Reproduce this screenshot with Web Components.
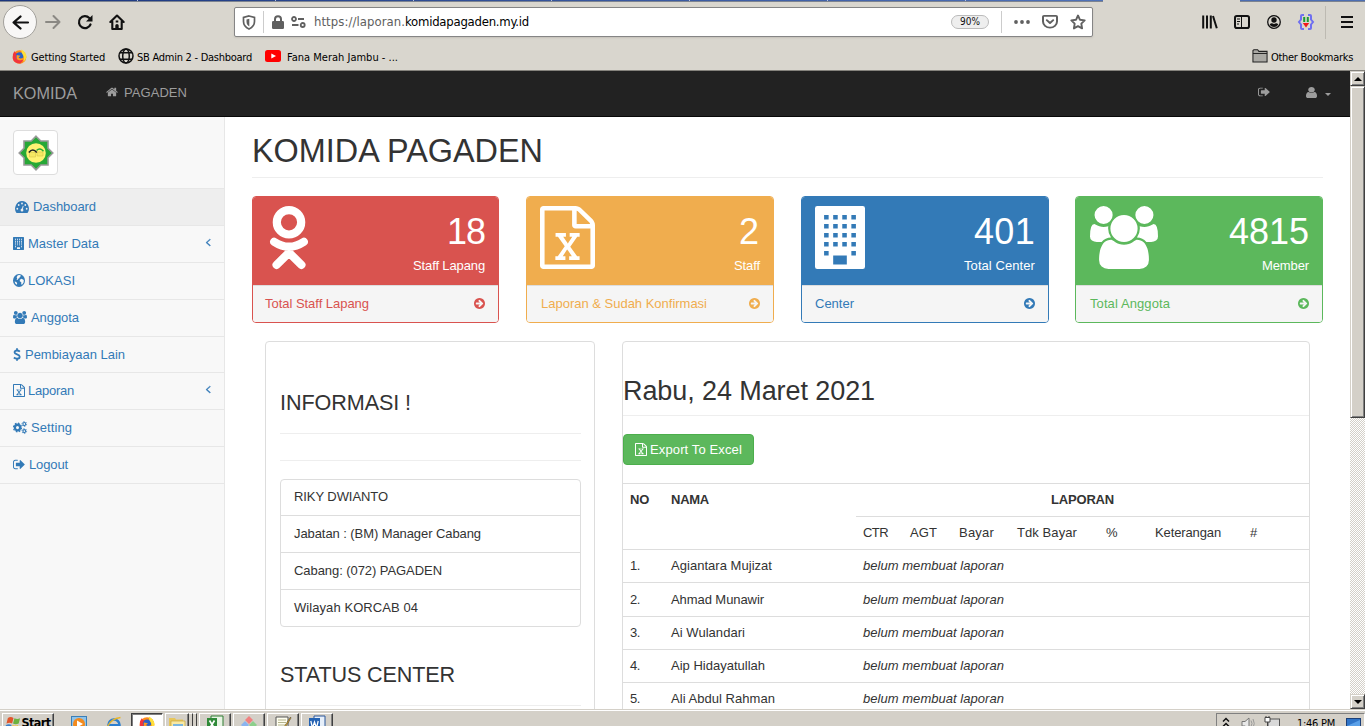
<!DOCTYPE html>
<html lang="id">
<head>
<meta charset="utf-8">
<title>KOMIDA PAGADEN</title>
<style>
    html, body { margin: 0; height: 726px; overflow: hidden; }
    body {
        display: flex;
        flex-direction: column;
        background: #fff;
        color: #333;
        font: 13px/18px "Liberation Sans", Arial, sans-serif;
    }
    .viewport { display: flex; height: 638px; flex: none; }
    .page { flex: 1; min-width: 0; display: flex; flex-direction: column; overflow: hidden; }
    .wrapper { display: flex; flex: 1; min-height: 0; }
    main { flex: 1; min-width: 0; padding: 0 27px; overflow: hidden; }
    .stats { display: grid; grid-template-columns: 247px 248px 248px 247px; column-gap: 27px; height: 127px; margin-top: 18px; }
    .stats > :last-child { margin-left: -1px; }
    .columns { display: flex; gap: 27px; margin: 18px 13px 0 13px; }
</style>
</head>
<body>
    <browser-toolbar></browser-toolbar>
    <bookmarks-bar></bookmarks-bar>
    <div class="viewport">
        <div class="page">
            <site-navbar></site-navbar>
            <div class="wrapper">
                <side-menu>
                    <nav-item icon="tachometer" iw="14" gap="4" active><fit-text w="63">Dashboard</fit-text></nav-item>
                    <nav-item icon="building" iw="11" gap="4" arrow><fit-text w="71">Master Data</fit-text></nav-item>
                    <nav-item icon="globe" iw="12" gap="3"><fit-text w="47">LOKASI</fit-text></nav-item>
                    <nav-item icon="users" iw="14" gap="4"><fit-text w="48">Anggota</fit-text></nav-item>
                    <nav-item icon="usd" iw="8" gap="4" short><fit-text w="100">Pembiayaan Lain</fit-text></nav-item>
                    <nav-item icon="excel" iw="12" gap="3" arrow><fit-text w="46">Laporan</fit-text></nav-item>
                    <nav-item icon="cogs" iw="14" gap="4"><fit-text w="41">Setting</fit-text></nav-item>
                    <nav-item icon="signout" iw="12" gap="4"><fit-text w="39">Logout</fit-text></nav-item>
                </side-menu>
                <main>
                    <page-title><fit-text w="291">KOMIDA PAGADEN</fit-text></page-title>
                    <div class="stats">
                        <stat-card color="#d9534f" icon="odnoklassniki" iw="38" offset="4" pad="12">
                            <fit-text slot="value" w="38">18</fit-text>
                            <fit-text slot="label" w="72">Staff Lapang</fit-text>
                            <fit-text slot="link" w="104">Total Staff Lapang</fit-text>
                        </stat-card>
                        <stat-card color="#f0ad4e" icon="excel" iw="55" pad="14">
                            <fit-text slot="value" w="21">2</fit-text>
                            <fit-text slot="label" w="26">Staff</fit-text>
                            <fit-text slot="link" w="166">Laporan &amp; Sudah Konfirmasi</fit-text>
                        </stat-card>
                        <stat-card color="#337ab7" icon="building" iw="50" pad="13">
                            <fit-text slot="value" w="61">401</fit-text>
                            <fit-text slot="label" w="71">Total Center</fit-text>
                            <fit-text slot="link" w="39">Center</fit-text>
                        </stat-card>
                        <stat-card color="#5cb85c" icon="users" iw="68" offset="1" pad="14">
                            <fit-text slot="value" w="80">4815</fit-text>
                            <fit-text slot="label" w="47">Member</fit-text>
                            <fit-text slot="link" w="80">Total Anggota</fit-text>
                        </stat-card>
                    </div>
                    <div class="columns">
                        <info-panel></info-panel>
                        <report-panel></report-panel>
                    </div>
                </main>
            </div>
        </div>
        <scroll-bar></scroll-bar>
    </div>
    <task-bar></task-bar>

<script>
const ICONS = {
    home: ['64 0 1664 1792', '<path d="M1472 992v480q0 26-19 45t-45 19h-384v-384h-256v384h-384q-26 0-45-19t-19-45v-480q0-1 .5-3t.5-3l575-474 575 474q1 2 1 6zm223-69l-62 74q-8 9-21 11h-3q-13 0-21-7l-692-577-692 577q-12 8-24 7-13-2-21-11l-62-74q-8-10-7-23.5t11-21.5l719-599q32-26 76-26t76 26l244 204v-195q0-14 9-23t23-9h192q14 0 23 9t9 23v408l219 182q10 8 11 21.5t-7 23.5z"/>'],
    signout: ['64 0 1600 1792', '<path d="M704 1440q0 4 1 20t.5 26.5-3 23.5-10 19.5-20.5 6.5h-320q-119 0-203.5-84.5t-84.5-203.5v-704q0-119 84.5-203.5t203.5-84.5h320q13 0 22.5 9.5t9.5 22.5q0 4 1 20t.5 26.5-3 23.5-10 19.5-20.5 6.5h-320q-66 0-113 47t-47 113v704q0 66 47 113t113 47h312l11.5 1 11.5 3 8 5.5 7 9 2 13.5zm928-544q0 26-19 45l-544 544q-19 19-45 19t-45-19-19-45v-288h-448q-26 0-45-19t-19-45v-384q0-26 19-45t45-19h448v-288q0-26 19-45t45-19 45 19l544 544q19 19 19 45z"/>'],
    user: ['256 0 1280 1792', '<path d="M1536 1399q0 109-62.5 187t-150.5 78h-854q-88 0-150.5-78t-62.5-187q0-85 8.5-160.5t31.5-152 58.5-131 94-89 134.5-34.5q131 128 313 128t313-128q76 0 134.5 34.5t94 89 58.5 131 31.5 152 8.5 160.5zm-256-887q0 159-112.5 271.5t-271.5 112.5-271.5-112.5-112.5-271.5 112.5-271.5 271.5-112.5 271.5 112.5 112.5 271.5z"/>'],
    users: ['0 0 1920 1792', '<path d="M593 896q-162 5-265 128h-134q-82 0-138-40.5t-56-118.5q0-353 124-353 6 0 43.5 21t97.5 42.5 119 21.5q67 0 133-23-5 37-5 66 0 139 81 256zm1071 637q0 120-73 189.5t-194 69.5h-874q-121 0-194-69.5t-73-189.5q0-53 3.5-103.5t14-109 26.5-108.5 43-97.5 62-81 85.5-53.5 111.5-20q10 0 43 21.5t73 48 107 48 135 21.5 135-21.5 107-48 73-48 43-21.5q61 0 111.5 20t85.5 53.5 62 81 43 97.5 26.5 108.5 14 109 3.5 103.5zm-1024-1277q0 106-75 181t-181 75-181-75-75-181 75-181 181-75 181 75 75 181zm704 384q0 159-112.5 271.5t-271.5 112.5-271.5-112.5-112.5-271.5 112.5-271.5 271.5-112.5 271.5 112.5 112.5 271.5zm576 225q0 78-56 118.5t-138 40.5h-134q-103-123-265-128 81-117 81-256 0-29-5-66 66 23 133 23 59 0 119-21.5t97.5-42.5 43.5-21q124 0 124 353zm-128-609q0 106-75 181t-181 75-181-75-75-181 75-181 181-75 181 75 75 181z"/>'],
    angle: ['500 300 900 1300', '<path d="M1203 544q0 13-10 23l-393 393 393 393q10 10 10 23t-10 23l-50 50q-10 10-23 10t-23-10l-466-466q-10-10-10-23t10-23l466-466q10-10 23-10t23 10l50 50q10 10 10 23z" stroke="currentColor" stroke-width="50"/>'],
    arrow: ['128 128 1536 1536', '<path d="M1413 896q0-27-18-45l-91-91-362-362q-18-18-45-18t-45 18l-91 91q-18 18-18 45t18 45l189 189h-502q-26 0-45 19t-19 45v128q0 26 19 45t45 19h502l-189 189q-19 19-19 45t19 45l91 91q18 18 45 18t45-18l362-362 91-91q18-18 18-45zm251 0q0 209-103 385.5t-279.5 279.5-385.5 103-385.5-103-279.5-279.5-103-385.5 103-385.5 279.5-279.5 385.5-103 385.5 103 279.5 279.5 103 385.5z" fill-rule="evenodd"/>'],
    excel: ['128 0 1536 1792', '<path d="M1596 380q28 28 48 76t20 88v1152q0 40-28 68t-68 28h-1344q-40 0-68-28t-28-68v-1600q0-40 28-68t68-28h896q40 0 88 20t76 48zm-444-244v376h376q-10-29-22-41l-313-313q-12-12-41-22zm384 1528v-1024h-416q-40 0-68-28t-28-68v-416h-768v1536h1280zm-979-234v106h281v-106h-75l103-161q5-7 10-16.5t7.5-13.5 3.5-4h2q1 4 5 10 2 4 4.5 7.5t6 8 6.5 8.5l107 161h-76v106h291v-106h-68l-192-273 195-282h67v-107h-279v107h74l-103 159q-4 7-10 16.5t-9 13.5l-2 3h-2q-1-4-5-10-6-11-17-23l-106-159h76v-107h-290v107h68l189 272-194 283h-68z"/>'],
    building: ['0 0 1408 1792', '<path fill-rule="evenodd" d="M64 0h1280q64 0 64 64v1664q0 64-64 64H64q-64 0-64-64V64Q0 0 64 0z' +
        [256, 512, 768, 1024, 1280].map(y => [256, 512, 768, 1024].filter(x => y < 1280 || x === 256 || x === 1024)
            .map(x => `M${x} ${y}h128v128h-128z`).join('')).join('') + 'M512 1408h384v256H512z"/>'],
    odnoklassniki: ['0 0 38 63', '<g fill="none" stroke="currentColor" stroke-width="8.2" stroke-linecap="round" stroke-linejoin="round"><circle cx="19" cy="16.3" r="12.2"/><path d="M4.2 35.8Q19 45.6 33.8 35.8M6.6 58.8L19 46.6 31.4 58.8M19 41v5"/></g>'],
    tachometer: ['0 0 14 12', '<path d="M7 1a7 7 0 0 1 5.9 10.6q-.2.4-.7.4H1.8q-.5 0-.7-.4A7 7 0 0 1 7 1z"/><g fill="#eee"><circle cx="2.3" cy="8" r=".9"/><circle cx="3.7" cy="4.7" r=".9"/><circle cx="7" cy="3.2" r=".9"/><circle cx="10.3" cy="4.7" r=".9"/><circle cx="11.7" cy="8" r=".9"/><circle cx="7" cy="9.3" r="1.4"/><path d="M7.6 9.5l1-4-.8-.2-1.3 4z"/></g>'],
    globe: ['0 0 12 12', '<circle cx="6" cy="6" r="6"/><path fill="#f8f8f8" d="M4.8 1.2l2.2-.3 1 .9-1.3.9-.2 1.1-1.3.6-.4 1-1.2.2.6-1.6L3.6 3zM6.800 5.200l1.800-.8 2.200 1.200-.2 2.200-1.600 2.200-.8-.6.1-1.800-1.500-.8zM1.600 7l1.800.4.8 1.400-.5 1.200Q2 9 1.600 7z"/>'],
    usd: ['0 0 8 13', '<path fill="none" stroke="currentColor" stroke-width="1.8" d="M6.9 3.600Q5.700 2.500 4 2.500 1.500 2.500 1.500 4.300c0 2.500 5.200 1.700 5.200 4.400 0 1.300-1.100 2-2.700 2-1.900 0-3.100-1.200-3.100-1.200M4 .3v2.200M4 10.500v2.200"/>'],
    cogs: ['0 0 14 12', '<g fill="none" stroke="currentColor"><circle cx="4.5" cy="6" r="2.6" stroke-width="2.2"/><circle cx="4.5" cy="6" r="4" stroke-width="1.2" stroke-dasharray="1.6 1.54"/><circle cx="11.3" cy="2.8" r="1.4" stroke-width="1.1"/><circle cx="11.3" cy="2.8" r="2.3" stroke-width=".8" stroke-dasharray="1.2 1.2"/><circle cx="11.3" cy="9.3" r="1.4" stroke-width="1.1"/><circle cx="11.3" cy="9.3" r="2.3" stroke-width=".8" stroke-dasharray="1.2 1.2"/></g>'],
    back: ['0 0 16 16', '<path d="M15 8H1.5M8 1.5L1.5 8 8 14.5" fill="none" stroke="currentColor" stroke-width="2.2" stroke-linecap="round" stroke-linejoin="round"/>'],
    forward: ['0 0 16 16', '<path d="M1 8h13.5M8.500 2l6 6-6 6" fill="none" stroke="currentColor" stroke-width="2" stroke-linecap="round" stroke-linejoin="round"/>'],
    reload: ['0 0 16 16', '<path d="M13.5 10.5A6 6 0 1 1 12.300 4" fill="none" stroke="currentColor" stroke-width="2.2" stroke-linecap="round"/><path d="M15.5 1v6.500H9z"/>'],
    house: ['0 0 16 16', '<path d="M1.3 8L8 1.500 14.700 8M3.300 7.500V15h9.400V7.500" fill="none" stroke="currentColor" stroke-width="2.1" stroke-linecap="round" stroke-linejoin="round"/><path d="M6.3 15v-3.500q0-1.500 1.700-1.500t1.700 1.500V15zM6.700 6.500h2.600v2H6.700z"/>'],
    shield: ['0 0 14 15', '<path d="M7 1l5.5 1.4v4.200c0 4-2.300 6-5.500 7.500C3.800 12.600 1.500 10.600 1.500 6.600V2.400z" fill="none" stroke="currentColor" stroke-width="1.7"/><path d="M7.3 3.700v7.700C5.400 10.200 4.500 9 4.500 6.500V4.400z"/>'],
    lock: ['0 0 12 14', '<path d="M3 7V4.200a3 3 0 0 1 6 0V7" fill="none" stroke="currentColor" stroke-width="2"/><rect y="6" width="12" height="8" rx="1.2"/>'],
    perms: ['0 0 15 12', '<g fill="none" stroke="currentColor" stroke-width="1.8"><circle cx="3" cy="3" r="2"/><path d="M7 3h6M1 9h6.500"/><circle cx="11.7" cy="9" r="2"/></g>'],
    dots: ['0 0 16 4', '<circle cx="2" cy="2" r="1.9"/><circle cx="8" cy="2" r="1.9"/><circle cx="14" cy="2" r="1.9"/>'],
    pocket: ['0 0 16 15', '<path d="M2 1h12q1 0 1 1v5a7 6.500 0 0 1-14 0V2q0-1 1-1zM4.800 5.500L8 8.600l3.200-3.100" fill="none" stroke="currentColor" stroke-width="2" stroke-linecap="round" stroke-linejoin="round"/>'],
    star: ['0 0 16 16', '<path d="M8 1.500l2 4.300 4.700.6-3.400 3.200.8 4.800L8 12.100l-4.100 2.300.8-4.800L1.300 6.400 6 5.800z" fill="none" stroke="currentColor" stroke-width="1.9" stroke-linejoin="round"/>'],
    library: ['0 0 16 14', '<path d="M1.200.5v13M5 .5v13M8.800.5v13M11 1l3.800 12.300" fill="none" stroke="currentColor" stroke-width="2"/>'],
    sidebar: ['0 0 16 14', '<rect x="1" y="1" width="14" height="12" rx="1.8" fill="none" stroke="currentColor" stroke-width="2"/><path d="M7 2h1v10H7zM3 3.500h3v1H3zM3 6h3v1H3zM3 8.500h2v1H3z"/>'],
    account: ['0 0 14 14', '<circle cx="7" cy="7" r="6.3" fill="none" stroke="currentColor" stroke-width="1.3"/><circle cx="7" cy="5" r="2.7"/><path d="M2.700 9.500q1-1.500 2.300-1.300l2 .8 2-.8q1.300-.2 2.300 1.300Q10 12 7 12T2.700 9.500z"/>'],
    braces: ['0 0 16 16', '<g fill="none" stroke="#6f6ff0" stroke-width="2"><path d="M6 1H4Q3 1 3 2v3.500L1 8l2 2.500V14q0 1 1 1h2M10 1h2q1 0 1 1v3.500L15 8l-2 2.500V14q0 1-1 1h-2"/></g><path d="M5.200 3H7.200v5H5.200zM8.800 3h2v5h-2z" fill="#1c9a35"/><path d="M4.800 9h6.400L8 13.500z" fill="#f01818"/>'],
    menu: ['0 0 12 12', '<path d="M0 0h12v2H0zM0 5h12v2H0zM0 10h12v2H0z"/>'],
    firefox: ['0 0 16 16', '<circle cx="8" cy="8.500" r="7.300" fill="#ff8a16"/><path d="M1 5.500Q2 3 3 2q0 1.500 1 2l2 .5L5 8l3 3 4 1-3 3.500Q2 15.500.8 10z" fill="#f1343c"/><circle cx="8.200" cy="7.500" r="4" fill="#2a62c8"/><path d="M5 6.500l4 .7-2 1.800q2 2 5 0-1 3.500-4.500 3T5 6.500z" fill="#ff9a1f"/><path d="M10 .5q5 2.500 5.500 8-1 4-3.500 5 1.500-5-.5-7.500T10 .5z" fill="#ffe03a"/>'],
    world: ['0 0 16 16', '<g fill="none" stroke="#111" stroke-width="1.5"><circle cx="8" cy="8" r="7"/><ellipse cx="8" cy="8" rx="3.300" ry="7"/><path d="M2 4.700h12M2 11.300h12"/></g>'],
    youtube: ['0 0 16 12', '<rect width="16" height="12" rx="2.500" fill="#f00"/><path d="M6.300 3.400v5.200L11 6z" fill="#fff"/>'],
    folder: ['0 0 17 14', '<path d="M1 13V1.500L2 .7h4l1.300 1.700H16V13z" fill="#aaa9a4" stroke="#222" stroke-width="1.100"/><path d="M1 4.500h15" stroke="#222"/>'],
    emblem: ['0 0 36 36', '<path d="M18 1.200l4.800 4.800H30v7.200l4.800 4.800-4.800 4.800V30h-7.200L18 34.800 13.200 30H6v-7.200L1.200 18 6 13.200V6h7.200z" fill="#27a836" stroke="#999" stroke-width="1.600"/><circle cx="18" cy="18" r="9.800" fill="#fff373"/><path d="M11.500 17.500h6v4.500h-6zM19 17h6v4h-6z" fill="#f6e963" stroke="#d9c84a" stroke-width=".6"/><path d="M10.800 17.500q4-5 8 0" fill="none" stroke="#222" stroke-width="1.500"/><path d="M18.500 15.500q3.500-3.500 7 .8" fill="none" stroke="#27a836" stroke-width="1.400"/>'],
    flag: ['0 0 16 16', '<path d="M2 2q3-2 6 0L6.500 8Q4 6.500.500 8z" fill="#e0562c"/><path d="M9 2.500q3 1.500 6 0L13.500 8Q10 9.500 7.500 8z" fill="#6cb33f"/><path d="M0 9.500q3-1.500 6 0L4.500 15q-3-1.500-6 0z" fill="#3b7fc9"/><path d="M7 9.500q3 1.500 6 0L11.500 15q-3 1-6 0z" fill="#f5c32c"/>'],
    player: ['0 0 16 16', '<rect x=".5" y=".5" width="15" height="14" fill="#8fc3ea" stroke="#3a7fb8"/><circle cx="8" cy="8" r="6" fill="#f28a1e"/><path d="M6 4.500v7L12 8z" fill="#fff"/>'],
    explorer: ['0 0 16 16', '<circle cx="8" cy="9" r="5.500" fill="none" stroke="#2c7fd0" stroke-width="2.600"/><path d="M3 9h11" stroke="#2c7fd0" stroke-width="2"/><path d="M1 12Q4 3 14.500 1.500" fill="none" stroke="#e8b52a" stroke-width="1.400"/>'],
    files: ['0 0 16 16', '<path d="M0 2h6l1 1.500h7V16H0z" fill="#e7c65b"/><path d="M2 5h14v11H2z" fill="#f8e9a4" stroke="#c9a63c" stroke-width=".7"/><path d="M4 8h10v3H4z" fill="#7cb6df"/>'],
    sheet: ['0 0 16 16', '<path d="M4 0h12v16H4z" fill="#e8f4e4" stroke="#2f7d32"/><path d="M0 2h10v14H0z" fill="#2f8a38"/><path d="M2.500 4.500l5 8M7.500 4.500l-5 8" stroke="#fff" stroke-width="1.700"/>'],
    git: ['0 0 16 16', '<path d="M8 0l4 4-4 4-4-4z" fill="#f08080"/><path d="M4 5l4 4-4 4-4-4z" fill="#8ab4f0"/><path d="M12 5l4 4-4 4-4-4z" fill="#8ccf8c"/>'],
    notepad: ['0 0 16 16', '<path d="M1 1h12v15H1z" fill="#fffef0" stroke="#555"/><path d="M3 4h8M3 6.500h8M3 9h8" stroke="#b4b48c"/><path d="M15.500 1L9 11l-.5 2 1.600-1.300L16 2z" fill="#f0b020" stroke="#333" stroke-width=".5"/>'],
    word: ['0 0 16 16', '<path d="M5 0h11v16H5z" fill="#e6effa" stroke="#2b579a"/><path d="M0 2h11v14H0z" fill="#2463b4"/><path d="M1.800 5l1.700 7 2-6 2 6 1.700-7" fill="none" stroke="#fff" stroke-width="1.300"/>'],
    speaker: ['0 0 14 13', '<path d="M1 4.500h3L8 1v11L4 9H1z" fill="#e8e8e8" stroke="#777"/><path d="M10 3.500q2 3 0 6M12 2q2.500 4.500 0 9" fill="none" stroke="#999"/>'],
    network: ['0 0 16 14', '<rect x="4" y="3" width="11.500" height="9" fill="#d8d8d8" stroke="#555"/><path d="M1 1.500h5V6H1zM3.500 6v6M2 0v2M5 0v2" fill="#fff" stroke="#444"/>'],
    screen: ['0 0 15 12', '<rect x=".5" y=".5" width="14" height="11" fill="#2f74c8" stroke="#1b3f78"/><path d="M1 8L14 2v9H1z" fill="#5aa0e8"/>'],
    chevrons: ['0 0 8 11', '<path d="M1 4.500L4 1.500l3 3M1 9.500l3-3 3 3" fill="none" stroke="#111" stroke-width="1.500"/>']
};

class UiIcon extends HTMLElement {
    connectedCallback() {
        const [box, art] = ICONS[this.getAttribute('name')];
        const w = this.getAttribute('w');
        const h = this.getAttribute('h') || w;
        if (!this.shadowRoot) this.attachShadow({ mode: 'open' });
        this.shadowRoot.innerHTML = `
            <style>
                :host { display: inline-flex; flex: none; width: ${w}px; height: ${h}px; }
                svg { width: 100%; height: 100%; overflow: visible; }
            </style>
            <svg viewBox="${box}" fill="currentColor" preserveAspectRatio="none">${art}</svg>
        `;
    }
}

// Text set to a fixed advance width by spreading the difference over its letters
class FitText extends HTMLElement {
    connectedCallback() {
        if (!this.shadowRoot) this.attachShadow({ mode: 'open' });
        this.shadowRoot.innerHTML = `
            <style>
                :host { display: inline-block; flex: none; white-space: nowrap; }
            </style>
            <slot></slot>
        `;
        const range = document.createRange();
        range.selectNodeContents(this);
        const width = range.getBoundingClientRect().width;
        const target = Number(this.getAttribute('w'));
        this.style.letterSpacing = `${(target - width) / this.textContent.length}px`;
    }
}

class BrowserToolbar extends HTMLElement {
    connectedCallback() {
        this.attachShadow({ mode: 'open' });
        this.shadowRoot.innerHTML = `
            <style>
                :host { display: block; flex: none; height: 44px; background: #d9d6ce; color: #111; font: 13px/16px "DejaVu Sans Condensed", sans-serif; }
                .tabs { display: flex; justify-content: space-between; height: 2px; box-sizing: border-box; }
                .strip { border-bottom: 1px solid #7c8390; background: repeating-linear-gradient(90deg, transparent 0 137px, #b7c2dd 137px 138px), linear-gradient(90deg, #1a357d, #4f72b8); }
                .strip:first-child { width: 1103px; }
                .strip:last-child { width: 125px; background: #4c6eb3; }
                .bar { display: flex; align-items: center; height: 40px; }
                .cell { display: flex; align-items: center; justify-content: center; width: 32px; height: 32px; flex: none; }
                .back { box-sizing: border-box; width: 34px; height: 34px; margin-left: 3px; border: 1px solid #a2a09b; border-radius: 50%; background: #f8f7f6; }
                .url { display: flex; align-items: center; box-sizing: border-box; width: 859px; height: 30px; margin-left: 101px; border: 1px solid #858585; border-radius: 2px; background: #fff; color: #606060; box-shadow: 0 1px 2px #c4c1b9; }
                .line { width: 1px; height: 22px; background: #ccc; }
                .url b { font-weight: normal; color: #000; }
                .zoom { display: flex; align-items: center; justify-content: center; box-sizing: border-box; width: 38px; height: 14px; margin-left: auto; border: 1px solid #bbb; border-radius: 8px; background: #eee; color: #111; font-size: 10px; }
                .right { display: flex; margin-left: 101px; align-items: center; }
            </style>
            <div class="tabs"><div class="strip"></div><div class="strip"></div></div>
            <div class="bar">
                <div class="cell back"><ui-icon name="back" w="17" h="15"></ui-icon></div>
                <div class="cell" style="color:#8a8883"><ui-icon name="forward" w="16"></ui-icon></div>
                <div class="cell"><ui-icon name="reload" w="16"></ui-icon></div>
                <div class="cell"><ui-icon name="house" w="16"></ui-icon></div>
                <div class="url">
                    <ui-icon name="shield" w="14" h="15" style="margin:0 7px"></ui-icon>
                    <div class="line"></div>
                    <ui-icon name="lock" w="12" h="14" style="margin-left:8px"></ui-icon>
                    <ui-icon name="perms" w="15" h="12" style="margin:0 8px 0 7px"></ui-icon>
                    <fit-text w="91">https://laporan.</fit-text><b><fit-text w="124">komidapagaden.my.id</fit-text></b>
                    <div class="zoom"><fit-text w="20">90%</fit-text></div>
                    <div class="line" style="margin:0 12px"></div>
                    <ui-icon name="dots" w="16" h="4"></ui-icon>
                    <ui-icon name="pocket" w="16" h="14" style="margin:0 12px"></ui-icon>
                    <ui-icon name="star" w="16" style="margin-right:6px"></ui-icon>
                </div>
                <div class="right">
                    <div class="cell"><ui-icon name="library" w="16" h="14"></ui-icon></div>
                    <div class="cell"><ui-icon name="sidebar" w="16" h="14"></ui-icon></div>
                    <div class="cell"><ui-icon name="account" w="14"></ui-icon></div>
                    <div class="cell"><ui-icon name="braces" w="16"></ui-icon></div>
                    <div class="line" style="height:33px;margin:0 5px 0 3px;background:#bdbab2"></div>
                    <div class="cell"><ui-icon name="menu" w="12"></ui-icon></div>
                </div>
            </div>
        `;
    }
}

class BookmarksBar extends HTMLElement {
    connectedCallback() {
        this.attachShadow({ mode: 'open' });
        this.shadowRoot.innerHTML = `
            <style>
                :host { display: flex; align-items: center; box-sizing: border-box; flex: none; height: 27px; padding: 0 12px; border-bottom: 1px solid #85837d; background: #d9d6ce; color: #000; font: 11px/14px "DejaVu Sans Condensed", sans-serif; }
                span { display: flex; align-items: center; margin-right: 13px; }
                span:last-child { margin: 0 0 0 auto; }
                fit-text { padding-top: 1px; }
            </style>
            <span><ui-icon name="firefox" w="15" style="margin:-2px 4px 0 0"></ui-icon><fit-text w="74">Getting Started</fit-text></span>
            <span><ui-icon name="world" w="16" style="margin:-2px 3px 0 0"></ui-icon><fit-text w="115">SB Admin 2 - Dashboard</fit-text></span>
            <span><ui-icon name="youtube" w="16" h="12" style="margin:-2px 6px 0 0"></ui-icon><fit-text w="111">Fana Merah Jambu - ...</fit-text></span>
            <span><ui-icon name="folder" w="16" h="14" style="margin:-2px 3px 0 0"></ui-icon><fit-text w="82">Other Bookmarks</fit-text></span>
        `;
    }
}

class SiteNavbar extends HTMLElement {
    connectedCallback() {
        this.attachShadow({ mode: 'open' });
        this.shadowRoot.innerHTML = `
            <style>
                :host { display: flex; align-items: center; box-sizing: border-box; flex: none; height: 46px; padding: 0 19px 2px 13px; border-bottom: 1px solid #080808; background: #222; color: #9d9d9d; }
                .brand { font-size: 16.2px; margin-right: 29px; }
                .caret { border: 3px solid transparent; border-top-color: currentColor; border-bottom: 0; margin: 4px 0 0 8px; }
            </style>
            <span class="brand"><fit-text w="64">KOMIDA</fit-text></span>
            <ui-icon name="home" w="12" style="margin:0 6px 1px 0"></ui-icon>
            <fit-text w="63">PAGADEN</fit-text>
            <ui-icon name="signout" w="12" style="margin:0 0 1px auto"></ui-icon>
            <ui-icon name="user" w="11" h="13" style="margin:0 0 1px 36px"></ui-icon>
            <span class="caret"></span>
        `;
    }
}

class SideMenu extends HTMLElement {
    connectedCallback() {
        this.attachShadow({ mode: 'open' });
        this.shadowRoot.innerHTML = `
            <style>
                :host { display: block; box-sizing: border-box; flex: none; width: 225px; border-right: 1px solid #e7e7e7; background: #f8f8f8; }
                .logo { height: 72px; box-sizing: border-box; padding: 13px; border-bottom: 1px solid #e7e7e7; }
                .thumb { display: flex; align-items: center; justify-content: center; box-sizing: border-box; width: 45px; height: 45px; border: 1px solid #ddd; border-radius: 4px; background: #fff; }
            </style>
            <div class="logo"><div class="thumb"><ui-icon name="emblem" w="36"></ui-icon></div></div>
            <slot></slot>
        `;
    }
}

class NavItem extends HTMLElement {
    connectedCallback() {
        const pad = this.hasAttribute('active') ? 15 : 13;
        this.attachShadow({ mode: 'open' });
        this.shadowRoot.innerHTML = `
            <style>
                :host { display: flex; align-items: center; box-sizing: border-box; height: 37px; padding: 0 12px 0 ${pad}px; border-bottom: 1px solid #e7e7e7; color: #337ab7; }
                :host([active]) { background: #eee; }
                :host([short]) { height: 36px; }
            </style>
            <ui-icon name="${this.getAttribute('icon')}" w="${this.getAttribute('iw')}" h="13" style="margin:-1px ${this.getAttribute('gap')}px 0 0"></ui-icon>
            <slot></slot>
            ${this.hasAttribute('arrow') ? '<ui-icon name="angle" w="7" h="9" style="margin:0 0 4px auto"></ui-icon>' : ''}
        `;
    }
}

class PageTitle extends HTMLElement {
    connectedCallback() {
        this.attachShadow({ mode: 'open' });
        this.shadowRoot.innerHTML = `
            <style>
                :host { display: block; box-sizing: border-box; height: 61px; padding-top: 16px; border-bottom: 1px solid #eee; font-size: 32.4px; line-height: 36px; }
            </style>
            <slot></slot>
        `;
    }
}

class StatCard extends HTMLElement {
    connectedCallback() {
        this.attachShadow({ mode: 'open' });
        this.shadowRoot.innerHTML = `
            <style>
                :host { --tone: ${this.getAttribute('color')}; display: flex; flex-direction: column; box-sizing: border-box; border: 1px solid var(--tone); border-radius: 4px; overflow: hidden; }
                .head { display: flex; justify-content: space-between; box-sizing: border-box; height: 88px; padding: 9px 13px; background: var(--tone); color: #fff; }
                .text { display: flex; flex-direction: column; align-items: flex-end; }
                .value { font-size: 36px; line-height: 40px; margin-top: 6px; }
                .label { margin-top: 5px; }
                .foot { display: flex; flex: 1; align-items: center; justify-content: space-between; padding: 0 13px 0 ${this.getAttribute('pad')}px; border-top: 1px solid #ddd; background: #f5f5f5; color: var(--tone); }
            </style>
            <div class="head">
                <ui-icon name="${this.getAttribute('icon')}" w="${this.getAttribute('iw')}" h="63" style="margin-left:${this.getAttribute('offset') || 0}px"></ui-icon>
                <div class="text">
                    <div class="value"><slot name="value"></slot></div>
                    <div class="label"><slot name="label"></slot></div>
                </div>
            </div>
            <div class="foot"><slot name="link"></slot><ui-icon name="arrow" w="11" style="margin-bottom:1px"></ui-icon></div>
        `;
    }
}

class InfoPanel extends HTMLElement {
    connectedCallback() {
        this.attachShadow({ mode: 'open' });
        this.shadowRoot.innerHTML = `
            <style>
                :host { display: block; box-sizing: border-box; flex: none; width: 330px; height: 450px; padding: 0 13px 0 14px; border: 1px solid #ddd; border-radius: 4px; }
                .title { font-size: 21.6px; line-height: 24px; padding: 49px 0 18px; }
                .rule { height: 1px; background: #eee; }
                ul { margin: 18px 0 0; padding: 0; list-style: none; border: 1px solid #ddd; border-radius: 4px; }
                li { display: flex; align-items: center; box-sizing: border-box; height: 37px; padding-left: 13px; border-top: 1px solid #ddd; }
                li:first-child { height: 35px; padding-bottom: 2px; border-top: 0; }
                ul + .title { padding-top: 36px; }
            </style>
            <div class="title"><fit-text w="131">INFORMASI !</fit-text></div>
            <div class="rule"></div>
            <div class="rule" style="margin-top:26px"></div>
            <ul>
                <li><fit-text w="94">RIKY DWIANTO</fit-text></li>
                <li><fit-text w="187">Jabatan : (BM) Manager Cabang</fit-text></li>
                <li><fit-text w="148">Cabang: (072) PAGADEN</fit-text></li>
                <li><fit-text w="124">Wilayah KORCAB 04</fit-text></li>
            </ul>
            <div class="title"><fit-text w="175">STATUS CENTER</fit-text></div>
            <div class="rule"></div>
        `;
    }
}

const STAFF = [
    ['Agiantara Mujizat', 101],
    ['Ahmad Munawir', 93],
    ['Ai Wulandari', 74],
    ['Aip Hidayatullah', 94],
    ['Ali Abdul Rahman', 104]
];

class ReportPanel extends HTMLElement {
    connectedCallback() {
        const rows = STAFF.map(([name, width], i) => `
            <div class="row" style="${i === 1 ? 'height:34px;padding-bottom:0' : 'height:33px'}">
                <fit-text w="10">${i + 1}.</fit-text>
                <fit-text w="${width}">${name}</fit-text>
                <i><fit-text w="141">belum membuat laporan</fit-text></i>
            </div>`).join('');
        this.attachShadow({ mode: 'open' });
        this.shadowRoot.innerHTML = `
            <style>
                :host { display: block; box-sizing: border-box; flex: none; width: 688px; height: 450px; border: 1px solid #ddd; border-radius: 4px; }
                .title { box-sizing: border-box; height: 74px; padding-top: 34px; border-bottom: 1px solid #eee; font-size: 27px; line-height: 30px; }
                .export { display: flex; align-items: center; justify-content: center; box-sizing: border-box; width: 131px; height: 31px; margin: 18px 0; border: 1px solid #4cae4c; border-radius: 4px; background: #5cb85c; color: #fff; }
                .row, .head { display: grid; grid-template-columns: 41px 192px 1fr; align-items: center; box-sizing: border-box; padding-left: 7px; border-top: 1px solid #ddd; }
                .row { padding-bottom: 1px; }
                .head { height: 66px; font-weight: bold; align-items: start; }
                .head > fit-text { padding-top: 7px; }
                .group { display: flex; flex-direction: column; margin-left: -7px; }
                .group > div { box-sizing: border-box; height: 32px; padding-top: 7px; text-align: center; }
                .group > .sub { display: grid; grid-template-columns: 47px 49px 58px 89px 49px 95px 1fr; height: 33px; padding-left: 7px; border-top: 1px solid #ddd; font-weight: normal; text-align: left; }
            </style>
            <div class="title"><fit-text w="252">Rabu, 24 Maret 2021</fit-text></div>
            <div class="export"><ui-icon name="excel" w="12" h="13" style="margin-right:3px"></ui-icon><fit-text w="92">Export To Excel</fit-text></div>
            <div class="head">
                <fit-text w="19">NO</fit-text>
                <fit-text w="38">NAMA</fit-text>
                <div class="group">
                    <div><fit-text w="63">LAPORAN</fit-text></div>
                    <div class="sub">
                        <span><fit-text w="25">CTR</fit-text></span>
                        <span><fit-text w="27">AGT</fit-text></span>
                        <span><fit-text w="35">Bayar</fit-text></span>
                        <span><fit-text w="60">Tdk Bayar</fit-text></span>
                        <span><fit-text w="12">%</fit-text></span>
                        <span><fit-text w="66">Keterangan</fit-text></span>
                        <span><fit-text w="8">#</fit-text></span>
                    </div>
                </div>
            </div>
            ${rows}
        `;
    }
}

class ScrollBar extends HTMLElement {
    connectedCallback() {
        this.attachShadow({ mode: 'open' });
        this.shadowRoot.innerHTML = `
            <style>
                :host { display: flex; flex-direction: column; flex: none; width: 15px; background: repeating-conic-gradient(#fff 0 25%, #d4d0c8 0 50%) 0 0 / 2px 2px; }
                div { display: flex; align-items: center; justify-content: center; box-sizing: border-box; height: 15px; background: #d4d0c8; border: 1px solid; border-color: #d4d0c8 #404040 #404040 #d4d0c8; box-shadow: inset 1px 1px #fff, inset -1px -1px #808080; }
                .thumb { height: 332px; }
                .down { margin-top: auto; }
                i { border: 4px solid transparent; border-top: 0; border-bottom-color: #000; }
                .down i { border-top: 4px solid #000; border-bottom: 0; }
            </style>
            <div><i></i></div>
            <div class="thumb"></div>
            <div class="down"><i></i></div>
        `;
    }
}

class TaskBar extends HTMLElement {
    connectedCallback() {
        this.attachShadow({ mode: 'open' });
        this.shadowRoot.innerHTML = `
            <style>
                :host { display: flex; align-items: flex-start; box-sizing: border-box; flex: none; height: 17px; padding: 3px 0 0 2px; border-top: 1px solid #d4d0c8; background: #d4d0c8; box-shadow: inset 0 1px #fff; color: #000; overflow: hidden; font: 11px/14px "DejaVu Sans Condensed", sans-serif; }
                .btn { display: flex; justify-content: center; box-sizing: border-box; width: 32px; height: 26px; padding-top: 2px; margin-right: 2px; border: 1px solid; border-color: #fff #404040 #404040 #fff; box-shadow: inset -1px 0 #808080; }
                .start { width: 52px; font-weight: bold; font-size: 12.5px; margin-right: 17px; }
                .pressed { border-color: #404040 #fff #fff #404040; background: #fff; box-shadow: inset 1px 1px #808080; }
                .stack { width: 24px; margin: 0; }
                .edge { width: 3px; height: 24px; border-right: 1px solid #404040; border-top: 1px solid #fff; }
                .tray { display: flex; box-sizing: border-box; width: 149px; height: 24px; margin-left: auto; padding: 3px 3px 0 5px; border: 1px solid; border-color: #808080 #fff #fff #808080; }
            </style>
            <div class="btn start"><ui-icon name="flag" w="15" style="margin-right:1px"></ui-icon><fit-text w="29">Start</fit-text></div>
            <ui-icon name="player" w="16" style="margin:3px 19px 0 0"></ui-icon>
            <ui-icon name="explorer" w="16" style="margin:3px 9px 0 0"></ui-icon>
            <div class="btn pressed"><ui-icon name="firefox" w="16"></ui-icon></div>
            <div class="btn stack"><ui-icon name="files" w="16"></ui-icon></div>
            <div class="edge"></div><div class="edge" style="margin-right:2px"></div>
            <div class="btn"><ui-icon name="sheet" w="16"></ui-icon></div>
            <div class="btn"><ui-icon name="git" w="16"></ui-icon></div>
            <div class="btn"><ui-icon name="notepad" w="16"></ui-icon></div>
            <div class="btn"><ui-icon name="word" w="16"></ui-icon></div>
            <div class="tray">
                <ui-icon name="chevrons" w="8" h="11"></ui-icon>
                <ui-icon name="speaker" w="14" h="13" style="margin:0 9px 0 11px"></ui-icon>
                <ui-icon name="network" w="16" h="14" style="margin:-1px 17px 0 0"></ui-icon>
                <fit-text w="38">1:46 PM</fit-text>
                <ui-icon name="screen" w="15" h="12" style="margin:1px 0 0 auto"></ui-icon>
            </div>
        `;
    }
}

customElements.define('browser-toolbar', BrowserToolbar);
customElements.define('bookmarks-bar', BookmarksBar);
customElements.define('site-navbar', SiteNavbar);
customElements.define('side-menu', SideMenu);
customElements.define('nav-item', NavItem);
customElements.define('page-title', PageTitle);
customElements.define('stat-card', StatCard);
customElements.define('info-panel', InfoPanel);
customElements.define('report-panel', ReportPanel);
customElements.define('scroll-bar', ScrollBar);
customElements.define('task-bar', TaskBar);
customElements.define('ui-icon', UiIcon);
// Last, so every text already has its final font when it is measured
customElements.define('fit-text', FitText);
</script>
</body>
</html>
